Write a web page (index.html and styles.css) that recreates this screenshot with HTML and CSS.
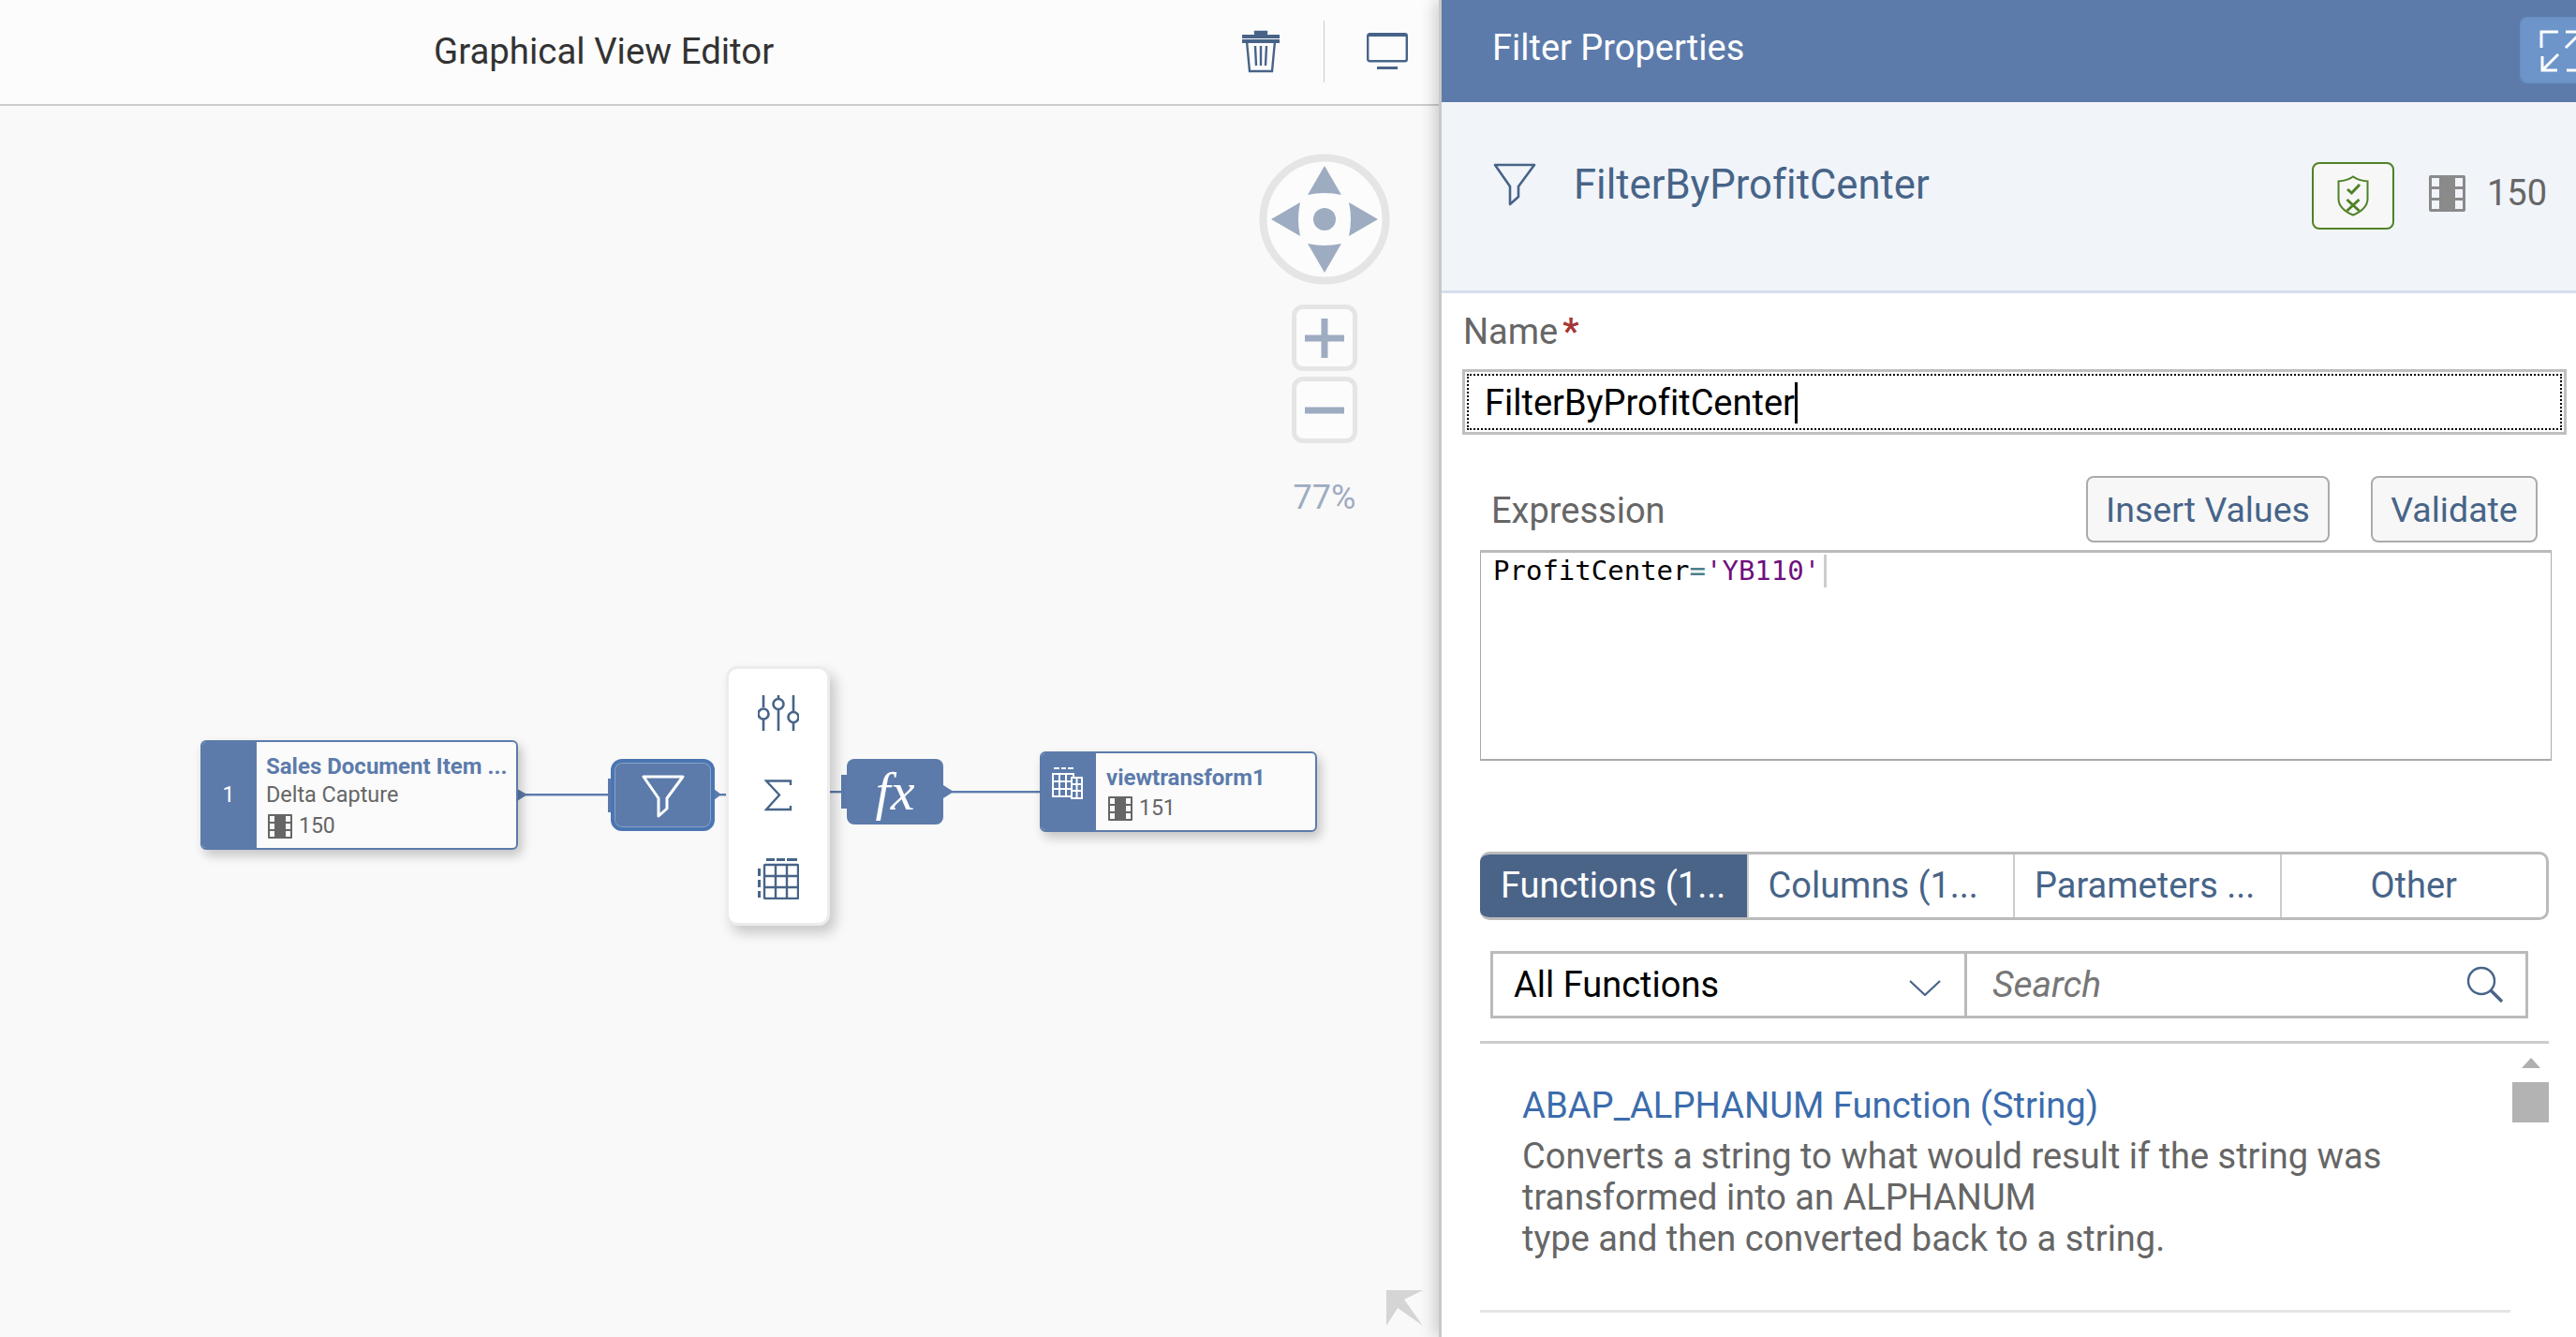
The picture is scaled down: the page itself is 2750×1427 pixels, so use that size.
FILE: index.html
```html
<!DOCTYPE html>
<html lang="en">
<head>
<meta charset="utf-8">
<title>Graphical View Editor</title>
<link rel="stylesheet" href="styles.css">
</head>
<body>
<div class="app">
  <section class="editor">
    <header class="editor-head">
      <h1 class="editor-title">Graphical View Editor</h1>
      <svg class="icon-trash" viewBox="0 0 42 46"><path d="M1 7h40M15 4V2h12v2M5 12h32M6 12l3 32h24l3-32M15 17l1 21M21 17v21M27 17l-1 21" fill="none" stroke="#476488" stroke-width="2.4"/><path d="M1 5h40v4H1zM14 2h14v3H14zM1 10h40v4H1z" fill="#476488"/></svg>
      <span class="head-sep"></span>
      <svg class="icon-monitor" viewBox="0 0 44 40"><rect x="1.2" y="1.2" width="41.6" height="29" rx="2" fill="none" stroke="#476488" stroke-width="2.4"/><rect x="1" y="1" width="42" height="3" fill="#476488"/><rect x="11" y="36" width="22" height="3" fill="#476488"/></svg>
    </header>
    <div class="canvas">
      <svg class="links" viewBox="0 0 1536 1314">
        <g fill="#5c7bab">
          <path d="M552 729l11 6-11 7z"/>
          <rect x="560" y="734" width="90" height="2.4"/>
          <rect x="649" y="718" width="4" height="36"/>
          <path d="M762 729l8 6-8 6z"/>
          <rect x="768" y="734" width="8" height="2.4"/>
          <rect x="885" y="731" width="14" height="2.4"/>
          <rect x="898" y="714" width="7" height="36"/>
          <path d="M1007 725l11 7-11 7z"/>
          <rect x="1016" y="731" width="95" height="2.4"/>
        </g>
      </svg>

      <article class="node node-source">
        <div class="node-strip">1</div>
        <div class="node-body">
          <div class="node-name">Sales Document Item ...</div>
          <div class="node-sub">Delta Capture</div>
          <div class="node-rows">
            <svg class="rows-icon" viewBox="0 0 26 26"><path fill="#666" d="M1 0h24a1 1 0 0 1 1 1v24a1 1 0 0 1-1 1H1a1 1 0 0 1-1-1V1a1 1 0 0 1 1-1z"/><path fill="#fbfbfb" d="M2 2h5v6H2zM19 2h5v6h-5zM2 10h5v6H2zM19 10h5v6h-5zM2 18h5v6H2zM19 18h5v6h-5z"/></svg>
            <span>150</span>
          </div>
        </div>
      </article>

      <div class="op op-filter">
        <svg class="op-funnel" viewBox="0 0 46 46"><path d="M2 2h42L27 25v11l-9 8V25z" fill="none" stroke="#fff" stroke-width="3" stroke-linejoin="round"/></svg>
      </div>

      <div class="palette">
        <svg class="pal-icon pal-sliders" viewBox="0 0 44 38"><g fill="none" stroke="#476488" stroke-width="2.6"><path d="M6 0v13M6 26v12M22 0v3M22 16v22M38 0v17M38 30v8"/><circle cx="6" cy="20" r="5.5"/><circle cx="22" cy="9.5" r="5.5"/><circle cx="38" cy="23.500" r="5.5"/></g></svg>
        <svg class="pal-icon pal-sigma" viewBox="0 0 30 34"><path d="M28 6V1.500H2l14 15L2 32h26v-4" fill="none" stroke="#476488" stroke-width="2.400"/></svg>
        <svg class="pal-icon pal-table" viewBox="0 0 44 44"><g fill="none" stroke="#476488" stroke-width="2.4"><rect x="7" y="7" width="36" height="36" rx="1"/><path d="M7 19h36M7 31h36M19 7v36M31 7v36"/><path d="M9 1.500h9M20 1.500h9M31 1.500h11M1.500 11v8M1.500 23v8M1.500 35v7" stroke-width="3"/></g></svg>
      </div>

      <div class="op op-fx"><span class="fx-label">fx</span></div>

      <article class="node node-target">
        <div class="node-strip">
          <svg class="view-icon" viewBox="0 0 34 35"><g fill="none" stroke="#fff" stroke-width="2"><path d="M2 8h22v24H2zM2 16h20M2 24h20M9 8v24M16 8v24"/><rect x="22" y="12" width="11" height="22" fill="#5c7bab"/><path d="M22 19h11M22 26h11M27.500 12v22"/></g><path d="M3 1h6v2H3zM11 1h5v2h-5zM18 1h6v2h-6z" fill="#fff"/></svg>
        </div>
        <div class="node-body">
          <div class="node-name">viewtransform1</div>
          <div class="node-rows">
            <svg class="rows-icon" viewBox="0 0 26 26"><path fill="#666" d="M1 0h24a1 1 0 0 1 1 1v24a1 1 0 0 1-1 1H1a1 1 0 0 1-1-1V1a1 1 0 0 1 1-1z"/><path fill="#fbfbfb" d="M2 2h5v6H2zM19 2h5v6h-5zM2 10h5v6H2zM19 10h5v6h-5zM2 18h5v6H2zM19 18h5v6h-5z"/></svg>
            <span>151</span>
          </div>
        </div>
      </article>

      <div class="nav">
        <svg class="nav-pad" viewBox="0 0 140 140">
          <circle cx="70" cy="70" r="65.500" fill="#fcfcfc" stroke="#e5e5e5" stroke-width="8"/>
          <g fill="#9eacc1">
            <path d="M70 13l18 31q-18-4-36 0zM70 127l18-31q-18 4-36 0zM13 70l31-18q-4 18 0 36zM127 70l-31-18q4 18 0 36z"/>
            <circle cx="70" cy="70" r="12"/>
          </g>
        </svg>
        <div class="zoom-btn">
          <svg class="zoom-glyph" viewBox="0 0 42 42"><path d="M0 17.500h42v7H0zM17.500 0h7v42h-7z" fill="#9eacc1"/></svg>
        </div>
        <div class="zoom-btn">
          <svg class="zoom-glyph" viewBox="0 0 42 42"><path d="M0 17.500h42v7H0z" fill="#9eacc1"/></svg>
        </div>
        <div class="zoom-level">77%</div>
      </div>

      <svg class="corner-arrow" viewBox="0 0 39 38"><path d="M0 0h39L19 10l20 28-27-19L0 38z" fill="#d5d5d5"/></svg>
    </div>
  </section>

  <aside class="props">
    <header class="props-head">
      <h2 class="props-title">Filter Properties</h2>
      <button class="expand-btn" type="button">
        <svg class="expand-icon" viewBox="0 0 50 46"><g fill="none" stroke="#fff" stroke-width="3"><path d="M3 20V3h18M29 3h18v0M46 3L29 20M4 44L21 27M4 29v15h16M30 44h17V27"/></g></svg>
      </button>
    </header>

    <div class="summary">
      <svg class="summary-funnel" viewBox="0 0 46 46"><path d="M2 2h42L27 25v11l-9 8V25z" fill="none" stroke="#476488" stroke-width="2.600" stroke-linejoin="round"/></svg>
      <div class="summary-name">FilterByProfitCenter</div>
      <button class="valid-btn" type="button">
        <svg class="shield" viewBox="0 0 34 44"><path d="M17 1.500c4 3 9 4.500 15.500 5V25c0 8-7 14-15.500 17.500C8.500 39 1.500 33 1.500 25V6.500C8 6 13 4.500 17 1.500z" fill="none" stroke="#4f8226" stroke-width="2"/><path d="M11 15l4.500 4L24 10M10.500 26l13 12M23.500 26l-13 12" fill="none" stroke="#4f8226" stroke-width="3"/></svg>
      </button>
      <svg class="rows-icon-lg" viewBox="0 0 39 39"><path fill="#8a8a8a" d="M2 0h35a2 2 0 0 1 2 2v35a2 2 0 0 1-2 2H2a2 2 0 0 1-2-2V2a2 2 0 0 1 2-2z"/><path fill="#f1f4f9" d="M3 3h8v9H3zM28 3h8v9h-8zM3 15h8v9H3zM28 15h8v9h-8zM3 27h8v9H3zM28 27h8v9h-8z"/></svg>
      <span class="summary-count">150</span>
    </div>

    <div class="name-field">
      <label class="field-label">Name<span class="req">*</span></label>
      <div class="name-input">
        <div class="name-focus"><span class="name-value">FilterByProfitCenter</span></div>
      </div>
    </div>

    <div class="expr-head">
      <span class="field-label">Expression</span>
      <div class="expr-actions">
        <button class="btn btn-insert" type="button">Insert Values</button>
        <button class="btn btn-validate" type="button">Validate</button>
      </div>
    </div>
    <div class="code"><span class="code-line">ProfitCenter<span class="tok-op">=</span><span class="tok-str">'YB110'</span></span></div>

    <div class="tabs">
      <div class="tab tab-active">Functions (1...</div>
      <div class="tab">Columns (1...</div>
      <div class="tab">Parameters ...</div>
      <div class="tab tab-center">Other</div>
    </div>

    <div class="filters">
      <div class="select">
        <span class="select-value">All Functions</span>
        <svg class="chevron" viewBox="0 0 34 17"><path d="M1 1l16 15L33 1" fill="none" stroke="#476488" stroke-width="2.2"/></svg>
      </div>
      <div class="search">
        <span class="search-ph">Search</span>
        <svg class="search-icon" viewBox="0 0 40 40"><circle cx="16" cy="16" r="14" fill="none" stroke="#476488" stroke-width="2.4"/><path d="M26 26l12 12" fill="none" stroke="#476488" stroke-width="3.400"/></svg>
      </div>
    </div>

    <div class="list">
      <div class="list-items">
        <div class="item">
          <div class="item-title">ABAP_ALPHANUM Function (String)</div>
          <p class="item-desc">Converts a string to what would result if the string was<br>transformed into an ALPHANUM<br>type and then converted back to a string.</p>
        </div>
      </div>
      <div class="scroll">
        <span class="scroll-up"></span>
        <span class="scroll-thumb"></span>
      </div>
    </div>
  </aside>
</div>
</body>
</html>
```
FILE: styles.css
```css
* { box-sizing: border-box; }
html, body { margin: 0; height: 100%; }
body { font-family: Roboto, "Noto Sans", sans-serif; font-variant-ligatures: none; color: #333; overflow: hidden; background: #fff; }
button { font-family: inherit; cursor: pointer; }
h1, h2, p { margin: 0; font-weight: 400; }

.app { display: flex; width: 2750px; height: 1427px; overflow: hidden; }

/* left editor */
.editor { width: 1536px; flex: none; display: flex; flex-direction: column; background: #f9f9f9; }
.editor-head { height: 113px; flex: none; display: flex; align-items: center; background: #fcfcfc; border-bottom: 2px solid #ccc; padding-right: 33px; }
.editor-title { font-size: 38.400px; line-height: 46px; color: #333; margin-left: 463px; margin-right: auto; position: relative; top: -1px; }
.icon-trash { width: 42px; height: 46px; margin-top: -1px; }
.head-sep { width: 1px; height: 66px; background: #ccc; margin: -2px 45px 0 46px; }
.icon-monitor { width: 44px; height: 40px; margin-top: -2px; }

.canvas { position: relative; flex: 1; overflow: hidden; }
.links { position: absolute; left: 0; top: 0; width: 1536px; height: 1314px; }

.node { position: absolute; display: flex; background: #fbfbfb; border: 2px solid #5c7bab; border-radius: 6px; box-shadow: 4px 6px 12px rgba(0,0,0,.22); overflow: hidden; }
.node-source { left: 214px; top: 677px; width: 339px; height: 117px; }
.node-target { left: 1110px; top: 689px; width: 296px; height: 86px; }
.node-strip { flex: none; width: 60px; margin: -2px 0 -2px -2px; background: #5c7bab; color: #fff; font-size: 23px; display: flex; align-items: center; justify-content: center; }
.node-target .node-strip { align-items: flex-start; }
.view-icon { width: 34px; height: 35px; margin: 16px 2px 0 0; }
.node-body { flex: 1; padding-left: 10px; min-width: 0; }
.node-name { font-size: 24px; font-weight: 700; color: #5c7bab; line-height: 28px; margin-top: 12px; white-space: nowrap; }
.node-sub { font-size: 23.400px; line-height: 33px; color: #666; }
.node-rows { display: flex; align-items: center; gap: 7px; font-size: 23px; color: #666; margin-top: 3px; }
.rows-icon { width: 26px; height: 26px; }
.node-source .node-rows { margin-left: 2px; }
.node-target .node-body { padding-left: 11px; }
.node-target .node-name { margin-top: 12px; }
.node-target .node-rows { margin-left: 2px; margin-top: 5px; }

.op { position: absolute; display: flex; align-items: center; justify-content: center; background: #5c7bab; }
.op-filter { left: 652px; top: 697px; width: 111px; height: 77px; border: 4px solid #4a76b2; border-radius: 12px; box-shadow: inset 0 0 0 1px #8aa2c6; }
.op-funnel { width: 46px; height: 46px; margin-top: 2px; }
.op-fx { left: 904px; top: 697px; width: 103px; height: 70px; border-radius: 8px; }
.fx-label { font-family: "Liberation Serif", serif; font-style: italic; font-size: 58px; color: #fff; line-height: 58px; }

.palette { position: absolute; left: 775px; top: 598px; width: 111px; height: 277px; background: #fff; border: 3px solid #ececec; border-radius: 12px; box-shadow: 6px 8px 14px rgba(0,0,0,.2); display: flex; flex-direction: column; align-items: center; padding-top: 28px; }
.pal-sliders { width: 44px; height: 38px; }
.pal-sigma { width: 30px; height: 34px; margin-top: 52px; }
.pal-table { width: 44px; height: 44px; margin-top: 50px; }

.nav { position: absolute; left: 1344px; top: 51px; width: 140px; display: flex; flex-direction: column; align-items: center; }
.nav-pad { width: 140px; height: 140px; }
.zoom-btn { width: 70px; height: 71px; border: 5px solid #e5e5e5; border-radius: 12px; background: #fcfcfc; display: flex; align-items: center; justify-content: center; margin-top: 6px; }
.nav-pad + .zoom-btn { margin-top: 21px; }
.zoom-glyph { width: 42px; height: 42px; }
.zoom-level { font-size: 36px; line-height: 38px; color: #9eacc1; margin-top: 39px; }

.corner-arrow { position: absolute; left: 1480px; top: 1264px; width: 39px; height: 38px; }

/* right panel */
.props { flex: none; width: 1214px; border-left: 3px solid #c8c8c8; box-shadow: -6px 0 14px rgba(0,0,0,.16); background: #fff; display: flex; flex-direction: column; overflow: hidden; position: relative; }
.props-head { height: 109px; flex: none; background: #5c7bab; display: flex; align-items: center; padding-left: 54px; }
.props-title { font-size: 38px; line-height: 46px; color: #fff; margin-top: -7px; }
.expand-btn { margin-left: auto; margin-right: -32px; width: 92px; height: 71px; margin-top: -2px; border: 2px solid #6a90c4; border-radius: 8px; background: #6d95ca; padding: 0 0 0 18px; display: flex; align-items: center; }
.expand-icon { width: 50px; height: 46px; flex: none; }

.summary { height: 204px; flex: none; background: #f1f4f9; border-bottom: 3px solid #d5dfee; display: flex; align-items: flex-start; padding: 64px 31px 0 55px; }
.summary-funnel { width: 46px; height: 46px; margin-top: 1px; }
.summary-name { font-size: 43.600px; line-height: 50px; color: #476488; margin-left: 40px; margin-right: auto; margin-top: 0; }
.valid-btn { width: 88px; height: 72px; border: 2px solid #4f8226; border-radius: 8px; background: #f7f7f7; padding: 0; display: flex; align-items: center; justify-content: center; }
.shield { width: 34px; height: 44px; }
.rows-icon-lg { width: 39px; height: 39px; margin: 14px 0 0 37px; }
.summary-count { font-size: 38px; line-height: 46px; color: #666; margin: 10px 0 0 23px; }

.name-field { padding: 19px 10px 0 22px; }
.field-label { display: block; font-size: 38px; line-height: 44px; color: #666; margin-left: 1px; }
.req { color: #a63434; font-weight: 700; margin-left: 5px; }
.name-input { margin-top: 18px; height: 70px; border: 3px solid #bfbfbf; padding: 2px; background: #fff; }
.name-focus { height: 100%; border: 2px dotted #000; display: flex; align-items: center; padding: 2px 0 0 17px; }
.name-value { font-size: 38px; line-height: 44px; color: #000; border-right: 3px solid #000; }

.expr-head { display: flex; justify-content: space-between; align-items: center; margin: 44px 41px 0 53px; height: 71px; }
.expr-head .field-label { margin-left: 0; margin-top: 2px; }
.expr-actions { display: flex; gap: 44px; }
.btn { height: 71px; border: 2px solid #ababab; border-radius: 8px; background: #f7f7f7; color: #476488; font-size: 37.500px; padding: 0; }
.btn-insert { width: 260px; }
.btn-validate { width: 178px; }

.code { margin: 8px 26px 0 41px; height: 225px; border: 1px solid #aaa; border-top: 3px solid #bbb; border-bottom: 2px solid #aaa; padding: 2px 0 0 13px; font-family: "DejaVu Sans Mono", monospace; font-size: 29px; line-height: 35px; color: #000; white-space: pre; }
.code-line { display: inline-block; border-right: 3px solid #ccc; padding-right: 4px; }
.tok-op { color: #4a7f8c; }
.tok-str { color: #6f0f7f; }

.tabs { margin: 97px 29px 0 41px; height: 73px; display: grid; grid-template-columns: repeat(4, 1fr); border: 3px solid #bbb; border-left: 0; border-radius: 10px; overflow: hidden; }
.tab { font-size: 38px; line-height: 67px; color: #476488; padding-left: 21px; border-left: 2px solid #ccc; white-space: nowrap; overflow: hidden; }
.tab-active { background: #4a6488; color: #fff; border-left: 0; margin: -3px 0; line-height: 73px; border-bottom: 3px solid #5c7bab; padding-left: 22px; }
.tab-center { text-align: center; padding-left: 0; }

.filters { margin: 33px 51px 0 52px; height: 72px; display: flex; border: 3px solid #bbb; }
.select { width: 506px; flex: none; display: flex; align-items: center; justify-content: space-between; padding: 0 25px 0 22px; border-right: 3px solid #bbb; }
.select-value { font-size: 38px; color: #000; }
.chevron { width: 34px; height: 17px; margin-top: 6px; }
.search { flex: 1; display: flex; align-items: center; justify-content: space-between; padding: 0 23px 0 27px; }
.search-ph { font-size: 39px; font-style: italic; color: #767676; }
.search-icon { width: 40px; height: 40px; }

.list { margin: 24px 29px 0 41px; border-top: 3px solid #ccc; display: flex; flex: 1; min-height: 0; }
.list-items { flex: 1; }
.item { padding: 44px 0 54px 45px; border-bottom: 3px solid #e5e5e5; margin-right: 2px; }
.item-title { font-size: 38.200px; line-height: 44px; color: #3c6cac; }
.item-desc { font-size: 38px; line-height: 44px; color: #666; margin-top: 10px; }
.scroll { width: 39px; flex: none; display: flex; flex-direction: column; align-items: center; padding-top: 15px; }
.scroll-up { width: 0; height: 0; border-left: 10px solid transparent; border-right: 10px solid transparent; border-bottom: 11px solid #b0b0b0; }
.scroll-thumb { width: 39px; height: 43px; background: #b3b3b3; margin-top: 15px; }
```
